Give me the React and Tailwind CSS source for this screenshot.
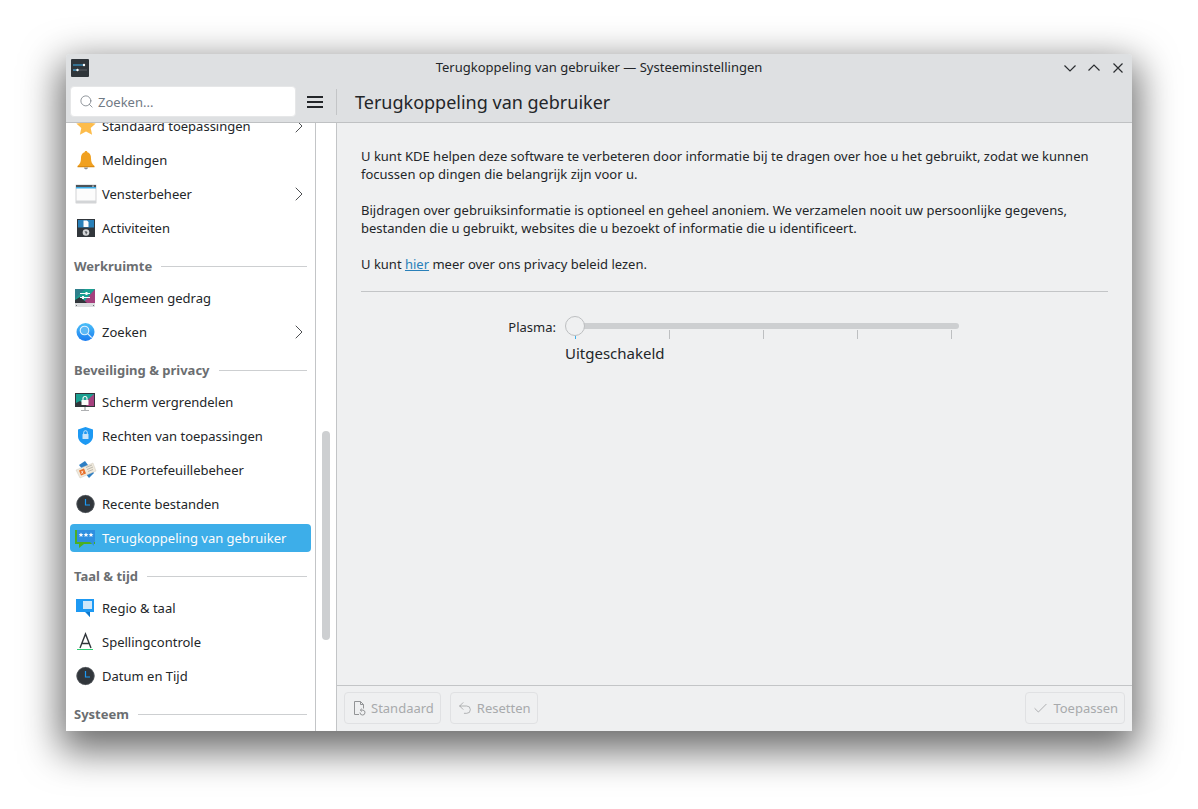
import React from "react";
import { Search, ChevronRight, Check, Undo2 } from "lucide-react";

// Sidebar icons, drawn on a 22x22 grid
const StarIcon = () => (
  <svg width="22" height="22" viewBox="0 0 22 22">
    <path d="M11 1.500l2.900 6.200 6.800.8-5 4.600 1.400 6.700L11 16.500l-6.100 3.300 1.400-6.700-5-4.600 6.800-.8z" fill="#fdbc4b" />
  </svg>
);

const BellIcon = () => (
  <svg width="22" height="22" viewBox="0 0 22 22">
    <path d="M11 2c.8 0 1.300.5 1.400 1.200C15 4 16 6.200 16 9c0 4 1 6 3.500 8h-17C5 15 6 13 6 9c0-2.800 1-5 3.600-5.800C9.700 2.500 10.200 2 11 2z" fill="#f0a020" />
    <path d="M2.500 17h17v1.200h-17z" fill="#d98a12" />
    <path d="M9 18.500h4c0 1.200-.9 1.800-2 1.800s-2-.6-2-1.800z" fill="#8d8f91" />
  </svg>
);

const WindowIcon = () => (
  <svg width="22" height="22" viewBox="0 0 22 22">
    <rect x="1" y="2" width="20" height="18" fill="#fcfcfc" stroke="#b4b6b8" strokeWidth="0.6" />
    <rect x="1" y="2" width="20" height="2" fill="#4d5358" />
    <rect x="1" y="4" width="20" height="1.500" fill="#3daee9" />
    <rect x="1" y="17.500" width="20" height="2.500" fill="#d3d5d7" />
    <rect x="17" y="2.600" width="2" height="1" fill="#cfd1d3" />
  </svg>
);

const ActivitiesIcon = () => (
  <svg width="22" height="22" viewBox="0 0 22 22">
    <rect x="2" y="2" width="18" height="18" fill="#31363b" />
    <rect x="3" y="3" width="16" height="7.500" fill="#2980b9" />
    <path d="M8.500 3.500h3.500l1.500 1.500v5h-5z" fill="#fcfcfc" />
    <circle cx="11" cy="15.500" r="3.300" fill="#d5d7d9" />
    <path d="M9.500 14.200h2l1 1.200-1.500 2.400-.5-1.800z" fill="#5c6166" />
  </svg>
);

const BehaviorIcon = () => (
  <svg width="22" height="22" viewBox="0 0 22 22">
    <rect x="0" y="2" width="20" height="18" fill="#dcdee0" />
    <path d="M0 2h20v14H0z" fill="#1aa091" />
    <path d="M20 2v14H8z" fill="#a5417e" />
    <path d="M0 2h10L0 12z" fill="#2f7f8c" />
    <path d="M0 16v-3l5-3 7 6z" fill="#31363b" />
    <path d="M5 6.500h10M5 10.500h10" stroke="#fcfcfc" strokeWidth="1" />
    <rect x="10.500" y="5" width="2" height="3" fill="#fcfcfc" />
    <rect x="7" y="9" width="2" height="3" fill="#fcfcfc" />
    <rect x="1" y="18" width="1" height="1" fill="#6b6e71" />
    <rect x="18" y="18" width="1" height="1" fill="#6b6e71" />
  </svg>
);

const SearchAppIcon = () => (
  <svg width="22" height="22" viewBox="0 0 22 22">
    <defs>
      <linearGradient id="sb" x1="0" y1="0" x2="0" y2="1">
        <stop offset="0" stopColor="#4cc0f8" />
        <stop offset="1" stopColor="#1a7cf0" />
      </linearGradient>
    </defs>
    <circle cx="10.500" cy="11" r="9" fill="url(#sb)" />
    <circle cx="9.500" cy="9.500" r="4.300" fill="#5cb8f5" stroke="#e4f3fd" strokeWidth="1.100" />
    <path d="M12.700 12.700l4 4" stroke="#e4f3fd" strokeWidth="1.200" />
  </svg>
);

const LockScreenIcon = () => (
  <svg width="22" height="22" viewBox="0 0 22 22">
    <rect x="0" y="2" width="20" height="14" fill="#31363b" />
    <path d="M1 3h18v12H1z" fill="#1aa091" />
    <path d="M19 3v12H6z" fill="#a5417e" />
    <path d="M1 15v-3l4-2 7 5z" fill="#31363b" />
    <rect x="6.500" y="9" width="7" height="5" fill="#fcfcfc" />
    <path d="M8 9V7.500a2 2 0 014 0V9" fill="none" stroke="#fcfcfc" strokeWidth="1.100" />
    <rect x="9" y="16" width="2" height="3" fill="#c5c7c9" />
    <rect x="6" y="19" width="8" height="1" fill="#aeb0b2" />
  </svg>
);

const ShieldIcon = () => (
  <svg width="22" height="22" viewBox="0 0 22 22">
    <path d="M10.500 2L18 4.500V11c0 4.500-3 7-7.500 9C6 18 3 15.500 3 11V4.500z" fill="#1d99f3" />
    <rect x="7.500" y="9" width="6" height="5" rx="0.500" fill="#c6e4fa" />
    <path d="M8.700 9V7.500a1.800 1.800 0 013.600 0V9" fill="none" stroke="#c6e4fa" strokeWidth="1" />
  </svg>
);

const WalletIcon = () => (
  <svg width="22" height="22" viewBox="0 0 22 22">
    <path d="M4 6l6-4 9 12-5 5z" fill="#2e7fc4" />
    <path d="M1 11L18 4l3 8-16 7z" fill="#efe9dc" stroke="#c9c3b5" strokeWidth="0.4" />
    <path d="M4 11.500l5-2 2 5-5 2z" fill="#e8702a" />
    <path d="M6.500 12L8 14.500M8 11.800l-1.500 3" stroke="#fff" strokeWidth="0.7" />
    <path d="M11 8.500L17 6M12 10.500L18 8M13 12.500l5-2" stroke="#a8a59c" strokeWidth="0.7" />
  </svg>
);

const ClockIcon = () => (
  <svg width="22" height="22" viewBox="0 0 22 22">
    <circle cx="10.500" cy="11" r="9" fill="#31363b" />
    <circle cx="10.500" cy="11" r="8.700" fill="none" stroke="#63676b" strokeWidth="0.6" />
    <path d="M10.500 6v6h4.500" fill="none" stroke="#1d99f3" strokeWidth="1.200" />
  </svg>
);

const FeedbackIcon = () => (
  <svg width="22" height="22" viewBox="0 0 22 22">
    <path d="M0 3h2v12h18v2H9l-5 4v-4H0z" fill="#4caf22" />
    <rect x="2" y="3" width="18" height="12" fill="#2f8fe0" />
    <path d="M15 15h4v4z" fill="#2f8fe0" />
    {[6, 11, 16].map((x) => (
      <path key={x} transform={`translate(${x} 8)`} d="M0-2.500l.7 1.600 1.700.1-1.300 1.100.4 1.700L0 1.100l-1.500.9.4-1.700-1.300-1.100 1.700-.1z" fill="#fcfcfc" />
    ))}
  </svg>
);

const RegionIcon = () => (
  <svg width="22" height="22" viewBox="0 0 22 22">
    <path d="M1 2h18v13h-4v5l-5-5H1z" fill="#1d99f3" />
    <path d="M8 4h9v8H8z" fill="#cfe6f9" />
    <path d="M11 15h4v5z" fill="#1075c8" />
  </svg>
);

const SpellIcon = () => (
  <svg width="22" height="22" viewBox="0 0 22 22">
    <path d="M5 17l5.500-14L16 17M7 12.500h7" fill="none" stroke="#31363b" strokeWidth="1.400" />
    <rect x="2" y="18" width="16" height="1" fill="#2ecc71" />
  </svg>
);

const AppIcon = () => (
  <svg width="18" height="18" viewBox="0 0 18 18">
    <rect width="18" height="18" rx="1" fill="#2f353a" />
    <path d="M2 6h12" stroke="#3daee9" strokeWidth="1" />
    <path d="M2 11h14" stroke="#5d6166" strokeWidth="1" />
    <path d="M2 11h5" stroke="#3daee9" strokeWidth="1" />
    <circle cx="13" cy="6" r="1.200" fill="#fcfcfc" />
    <circle cx="6.500" cy="11" r="1.200" fill="#fcfcfc" />
  </svg>
);

const DefaultsIcon = () => (
  <svg width="16" height="16" viewBox="0 0 16 16" fill="none" stroke="#929496" strokeWidth="1">
    <path d="M8 14.500H3.500v-13h6l3 3v4M9.500 1.500v3h3" />
    <path d="M9 12.500a2.500 2.500 0 103-2.400H9.500M10.800 8.700L9.300 10.100l1.500 1.400" />
  </svg>
);

const sidebar = [
  { icon: <StarIcon />, label: "Standaard toepassingen", arrow: true },
  { icon: <BellIcon />, label: "Meldingen" },
  { icon: <WindowIcon />, label: "Vensterbeheer", arrow: true },
  { icon: <ActivitiesIcon />, label: "Activiteiten" },
  { section: "Werkruimte" },
  { icon: <BehaviorIcon />, label: "Algemeen gedrag" },
  { icon: <SearchAppIcon />, label: "Zoeken", arrow: true },
  { section: "Beveiliging & privacy" },
  { icon: <LockScreenIcon />, label: "Scherm vergrendelen" },
  { icon: <ShieldIcon />, label: "Rechten van toepassingen" },
  { icon: <WalletIcon />, label: "KDE Portefeuillebeheer" },
  { icon: <ClockIcon />, label: "Recente bestanden" },
  { icon: <FeedbackIcon />, label: "Terugkoppeling van gebruiker", active: true },
  { section: "Taal & tijd" },
  { icon: <RegionIcon />, label: "Regio & taal" },
  { icon: <SpellIcon />, label: "Spellingcontrole" },
  { icon: <ClockIcon />, label: "Datum en Tijd" },
  { section: "Systeem" },
];

const SidebarRow = ({ item }) => {
  if (item.section) {
    return (
      <div className="h-[36px] shrink-0 pt-[6px] pl-[8px] pr-[8px] flex items-center gap-[9px]">
        <span className="font-bold text-[#6b6e71] whitespace-nowrap">{item.section}</span>
        <div className="flex-1 h-px bg-[#cdcfd1]"></div>
      </div>
    );
  }
  return (
    <div className="h-[34px] shrink-0 py-[3px] pl-[4px] pr-[4px]">
      <div
        className={
          item.active
            ? "h-[28px] flex items-center gap-[5px] pl-[5px] rounded-[4px] bg-[#3daee9] text-[#fcfcfc]"
            : "h-[28px] flex items-center gap-[5px] pl-[5px] rounded-[4px]"
        }
      >
        {item.icon}
        <span className="flex-1 whitespace-nowrap">{item.label}</span>
        {item.arrow && <ChevronRight size={24} strokeWidth={1} className="text-[#4d4f52]" />}
      </div>
    </div>
  );
};

const FooterButton = ({ icon, label }) => (
  <div className="h-[32px] flex items-center gap-[4px] px-[6px] border border-[#e0e1e3] rounded-[4px] text-[#a8aaac]">
    {icon}
    <span>{label}</span>
  </div>
);

export default function App() {
  return (
    <div className="w-[1198px] h-[809px] bg-white pl-[66px] pt-[54px] overflow-hidden font-['Noto_Sans',sans-serif] text-[13px] leading-[18px] text-[#232629]">
      <div className="w-[1066px] h-[677px] flex flex-col rounded-t-[4px] overflow-hidden bg-[#eff0f1] shadow-[0_14px_38px_6px_rgba(0,0,0,0.58)]">
        {/* title bar */}
        <div className="h-[27px] shrink-0 flex items-center pl-[5px] pr-[7px] bg-[#dee0e2]">
          <AppIcon />
          <div className="flex-1 text-center pl-[46px] pb-[2px]">Terugkoppeling van gebruiker — Systeeminstellingen</div>
          <div className="flex items-center gap-[10px]">
            <svg width="14" height="14" viewBox="0 0 14 14" fill="none" stroke="#2b2e31" strokeWidth="1.200">
              <path d="M1.500 4.500L7 10l5.500-5.500" />
            </svg>
            <svg width="14" height="14" viewBox="0 0 14 14" fill="none" stroke="#2b2e31" strokeWidth="1.200">
              <path d="M1.500 9.500L7 4l5.500 5.500" />
            </svg>
            <svg width="14" height="14" viewBox="0 0 14 14" fill="none" stroke="#2b2e31" strokeWidth="1.200">
              <path d="M2.500 2.500l9 9M11.500 2.500l-9 9" />
            </svg>
          </div>
        </div>

        {/* toolbar */}
        <div className="h-[42px] shrink-0 flex items-center bg-[#dee0e2] border-b border-[#bfc1c3]">
          <div className="w-[226px] h-[31px] ml-[4px] flex items-center gap-[4px] pl-[8px] bg-white border border-[#e6e7e8] rounded-[4px] text-[#707a85]">
            <Search size={15} strokeWidth={1.300} className="text-[#7a8087]" />
            <span>Zoeken...</span>
          </div>
          <div className="w-[16px] ml-[11px] flex flex-col gap-[3px]">
            <div className="h-[2px] bg-[#232629]"></div>
            <div className="h-[2px] bg-[#232629]"></div>
            <div className="h-[2px] bg-[#232629]"></div>
          </div>
          <div className="w-px h-[26px] ml-[13px] bg-[#c3c5c7]"></div>
          <div className="ml-[18px] text-[18px] leading-[24px]">Terugkoppeling van gebruiker</div>
        </div>

        <div className="flex-1 min-h-0 flex">
          {/* sidebar */}
          <div className="w-[250px] shrink-0 bg-white border-r border-[#c3c5c7] overflow-hidden">
            <div className="-mt-[14px] flex flex-col">
              {sidebar.map((item, i) => (
                <SidebarRow key={i} item={item} />
              ))}
            </div>
          </div>
          <div className="w-[21px] shrink-0 bg-white border-r border-[#c3c5c7] pl-[6px] pt-[308px]">
            <div className="w-[8px] h-[209px] rounded-full bg-[#cdcfd1]"></div>
          </div>

          {/* content */}
          <div className="flex-1 min-w-0 flex flex-col">
            <div className="flex-1 min-h-0 pt-[24px] px-[24px]">
              <p>
                U kunt KDE helpen deze software te verbeteren door informatie bij te dragen over hoe u het gebruikt, zodat we kunnen
                <br />
                focussen op dingen die belangrijk zijn voor u.
              </p>
              <p className="mt-[18px]">
                Bijdragen over gebruiksinformatie is optioneel en geheel anoniem. We verzamelen nooit uw persoonlijke gegevens,
                <br />
                bestanden die u gebruikt, websites die u bezoekt of informatie die u identificeert.
              </p>
              <p className="mt-[18px]">
                U kunt <span className="text-[#2980b9] underline">hier</span> meer over ons privacy beleid lezen.
              </p>
              <div className="h-px mt-[18px] bg-[#c3c5c7]"></div>

              {/* slider */}
              <div className="mt-[24px] flex">
                <div className="w-[195px] text-right pt-[2px]">Plasma:</div>
                <div className="ml-[9px] w-[394px]">
                  <div className="relative h-[20px] flex items-center">
                    <div className="ml-[10px] flex-1 h-[6px] rounded-full bg-[#cdcfd1]"></div>
                    <div className="absolute left-0 top-0 w-[20px] h-[20px] rounded-full bg-[#eff0f1] border border-[#bdbfc1]"></div>
                  </div>
                  <div className="ml-[10px] w-[377px] h-[9px] -mt-[6px] flex justify-between">
                    <div className="w-px h-[4px] mt-[5px] bg-[#3daee9]"></div>
                    <div className="w-px h-[9px] bg-[#bdbfc1]"></div>
                    <div className="w-px h-[9px] bg-[#bdbfc1]"></div>
                    <div className="w-px h-[9px] bg-[#bdbfc1]"></div>
                    <div className="w-px h-[9px] bg-[#bdbfc1]"></div>
                  </div>
                  <div className="mt-[4px] text-[15px] leading-[20px]">Uitgeschakeld</div>
                </div>
              </div>
            </div>

            {/* footer */}
            <div className="h-[46px] shrink-0 flex items-center gap-[9px] px-[7px] pb-px border-t border-[#c3c5c7]">
              <FooterButton icon={<DefaultsIcon />} label="Standaard" />
              <FooterButton icon={<Undo2 size={16} strokeWidth={1} className="text-[#929496]" />} label="Resetten" />
              <div className="flex-1"></div>
              <FooterButton icon={<Check size={17} strokeWidth={1} className="text-[#929496]" />} label="Toepassen" />
            </div>
          </div>
        </div>
      </div>
    </div>
  );
}
